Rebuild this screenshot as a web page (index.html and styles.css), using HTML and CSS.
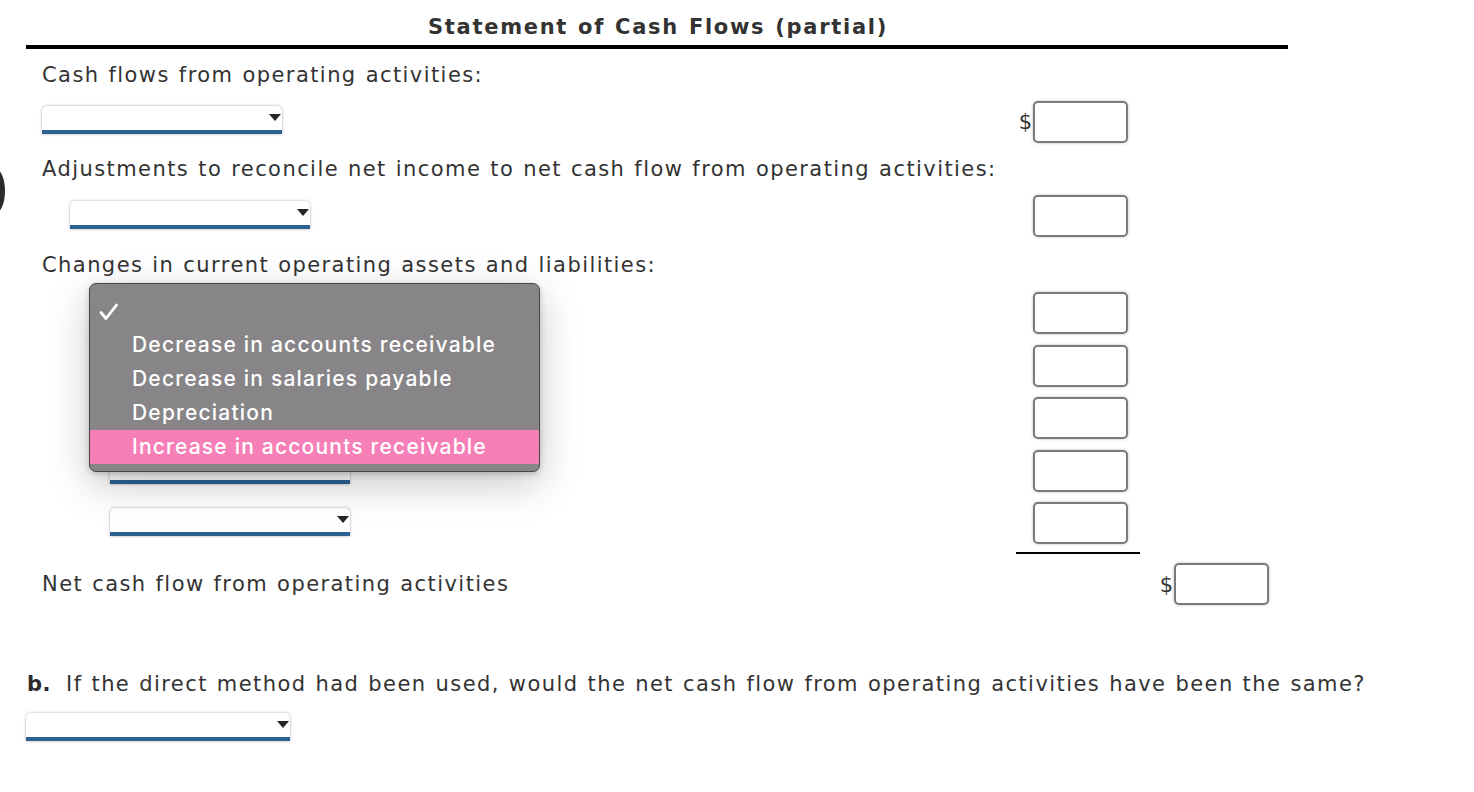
FILE: index.html
```html
<!DOCTYPE html>
<html>
<head>
<meta charset="utf-8">
<title>Statement of Cash Flows</title>
<link rel="stylesheet" href="styles.css">
</head>
<body>
<div class="edge-blob"></div>
<div class="sheet">
  <div class="title">Statement of Cash Flows (partial)</div>
  <div class="rule"></div>

  <div class="label l-cash">Cash flows from operating activities:</div>
  <div class="line">
    <div class="lead"><div class="sel ind-a"><span class="arrow"></span></div></div>
    <div class="col-a"><span class="dollar">$</span><span class="inp"></span></div>
    <div class="col-b"></div>
  </div>

  <div class="label l-adj">Adjustments to reconcile net income to net cash flow from operating activities:</div>
  <div class="line">
    <div class="lead"><div class="sel ind-b"><span class="arrow"></span></div></div>
    <div class="col-a"><span class="inp"></span></div>
    <div class="col-b"></div>
  </div>

  <div class="label l-chg">Changes in current operating assets and liabilities:</div>
  <div class="changes">
    <div class="line">
      <div class="lead"><div class="sel ind-c"><span class="arrow"></span></div></div>
      <div class="col-a"><span class="inp"></span></div>
      <div class="col-b"></div>
    </div>
    <div class="line">
      <div class="lead"><div class="sel ind-c"><span class="arrow"></span></div></div>
      <div class="col-a"><span class="inp"></span></div>
      <div class="col-b"></div>
    </div>
    <div class="line">
      <div class="lead"><div class="sel ind-c"><span class="arrow"></span></div></div>
      <div class="col-a"><span class="inp"></span></div>
      <div class="col-b"></div>
    </div>
    <div class="line">
      <div class="lead"><div class="sel ind-c"><span class="arrow"></span></div></div>
      <div class="col-a"><span class="inp"></span></div>
      <div class="col-b"></div>
    </div>
    <div class="line">
      <div class="lead"><div class="sel ind-c"><span class="arrow"></span></div></div>
      <div class="col-a"><span class="inp"></span></div>
      <div class="col-b"></div>
    </div>
  </div>
  <div class="sum-line">
    <div></div>
    <div class="underline"></div>
    <div></div>
  </div>
  <div class="line net">
    <div class="lead net-label">Net cash flow from operating activities</div>
    <div class="col-a"></div>
    <div class="col-b"><span class="dollar">$</span><span class="inp"></span></div>
  </div>

  <div class="question"><span class="qnum">b.</span>If the direct method had been used, would the net cash flow from operating activities have been the same?</div>
  <div class="sel sel-wide"><span class="arrow"></span></div>

  <div class="popup">
    <div class="opt checked"><svg class="check" width="20" height="18" viewBox="0 0 20 18"><polyline points="2,9.5 7,15.5 17.5,2" fill="none" stroke="#ffffff" stroke-width="2.8" stroke-linecap="round" stroke-linejoin="round"/></svg></div>
    <div class="opt">Decrease in accounts receivable</div>
    <div class="opt">Decrease in salaries payable</div>
    <div class="opt">Depreciation</div>
    <div class="opt active">Increase in accounts receivable</div>
  </div>
</div>
</body>
</html>
```
FILE: styles.css
```css
html, body {
  margin: 0;
  padding: 0;
  background: #ffffff;
}

body {
  font-family: "DejaVu Sans", Verdana, sans-serif;
  font-size: 21px;
  color: #333333;
  position: relative;
  overflow: hidden;
  height: 792px;
}

.edge-blob {
  position: absolute;
  left: -14px;
  top: 169px;
  width: 19px;
  height: 44px;
  border-radius: 50%;
  background: #2b2b2b;
}

.sheet {
  position: relative;
  margin-left: 26px;
  width: 1262px;
  letter-spacing: 1.43px;
  word-spacing: 0.9px;
}

.title {
  height: 45px;
  box-sizing: border-box;
  padding-top: 15px;
  line-height: 24px;
  text-align: center;
  font-weight: bold;
  letter-spacing: 1.7px;
  word-spacing: 1px;
  padding-left: 2px;
}

.rule {
  height: 4px;
  background: #000000;
}

.label {
  padding-left: 16px;
  white-space: nowrap;
}

.l-cash {
  height: 51px;
  line-height: 52px;
}

.l-adj {
  height: 53px;
  line-height: 54px;
}

.l-chg {
  height: 55px;
  line-height: 56px;
}

.line {
  display: grid;
  grid-template-columns: 1fr 124px 148px;
  height: 42px;
}

.changes {
  display: flex;
  flex-direction: column;
  gap: 10.5px;
}

.lead {
  display: flex;
  align-items: flex-start;
}

.col-a, .col-b {
  display: flex;
  justify-content: flex-end;
  align-items: center;
}

.col-a {
  padding-right: 12px;
}

.col-b {
  padding-right: 19px;
}

.dollar {
  margin-right: 1px;
  letter-spacing: 0;
  line-height: 42px;
  padding-top: 1px;
}

.inp {
  display: block;
  width: 95px;
  height: 42px;
  box-sizing: border-box;
  border: 2px solid #7b7b7b;
  border-radius: 5px;
  background: #ffffff;
  box-shadow: 0 0 3px rgba(0, 0, 0, 0.28);
}

.sel {
  display: flex;
  justify-content: flex-end;
  align-items: center;
  width: 240px;
  height: 28px;
  box-sizing: border-box;
  margin-top: 6px;
  background: #ffffff;
  border-bottom: 4px solid #2b6291;
  border-radius: 5px 5px 0 0;
  box-shadow: 0 0 3px rgba(0, 0, 0, 0.35);
  padding: 0 1px 2px 0;
}

.ind-a { margin-left: 16px; }
.ind-b { margin-left: 44px; }
.ind-c { margin-left: 84px; }

.arrow {
  width: 0;
  height: 0;
  border-left: 6.5px solid transparent;
  border-right: 6.5px solid transparent;
  border-top: 7px solid #262626;
}

.sum-line {
  display: grid;
  grid-template-columns: 1fr 124px 148px;
  margin-top: 8px;
  height: 2px;
}

.underline {
  background: #000000;
}

.net {
  margin-top: 8px;
}

.net-label {
  padding-left: 16px;
  line-height: 44px;
  white-space: nowrap;
}

.question {
  margin-top: 64px;
  line-height: 32px;
  padding-left: 1px;
  white-space: nowrap;
}

.qnum {
  font-weight: bold;
  color: #2b2b2b;
  letter-spacing: 0.5px;
  margin-right: 15px;
}

.sel-wide {
  width: 264px;
  margin-top: 13px;
}

.popup {
  position: absolute;
  left: 63px;
  top: 283px;
  width: 451px;
  box-sizing: border-box;
  padding: 10px 0 7px;
  background: #878587;
  border: 1px solid #474747;
  border-radius: 7px;
  box-shadow: 0 12px 40px rgba(0, 0, 0, 0.22), 0 2px 6px rgba(0, 0, 0, 0.2);
  font-family: "Inter", "Roboto", sans-serif;
  font-weight: 500;
  font-size: 21px;
  letter-spacing: 1.2px;
  word-spacing: 0;
  color: #ffffff;
}

.opt {
  height: 34px;
  line-height: 34px;
  padding-left: 42px;
  white-space: nowrap;
  position: relative;
}

.opt.active {
  background: #f67fb8;
}

.check {
  position: absolute;
  left: 9px;
  top: 9px;
}
```
